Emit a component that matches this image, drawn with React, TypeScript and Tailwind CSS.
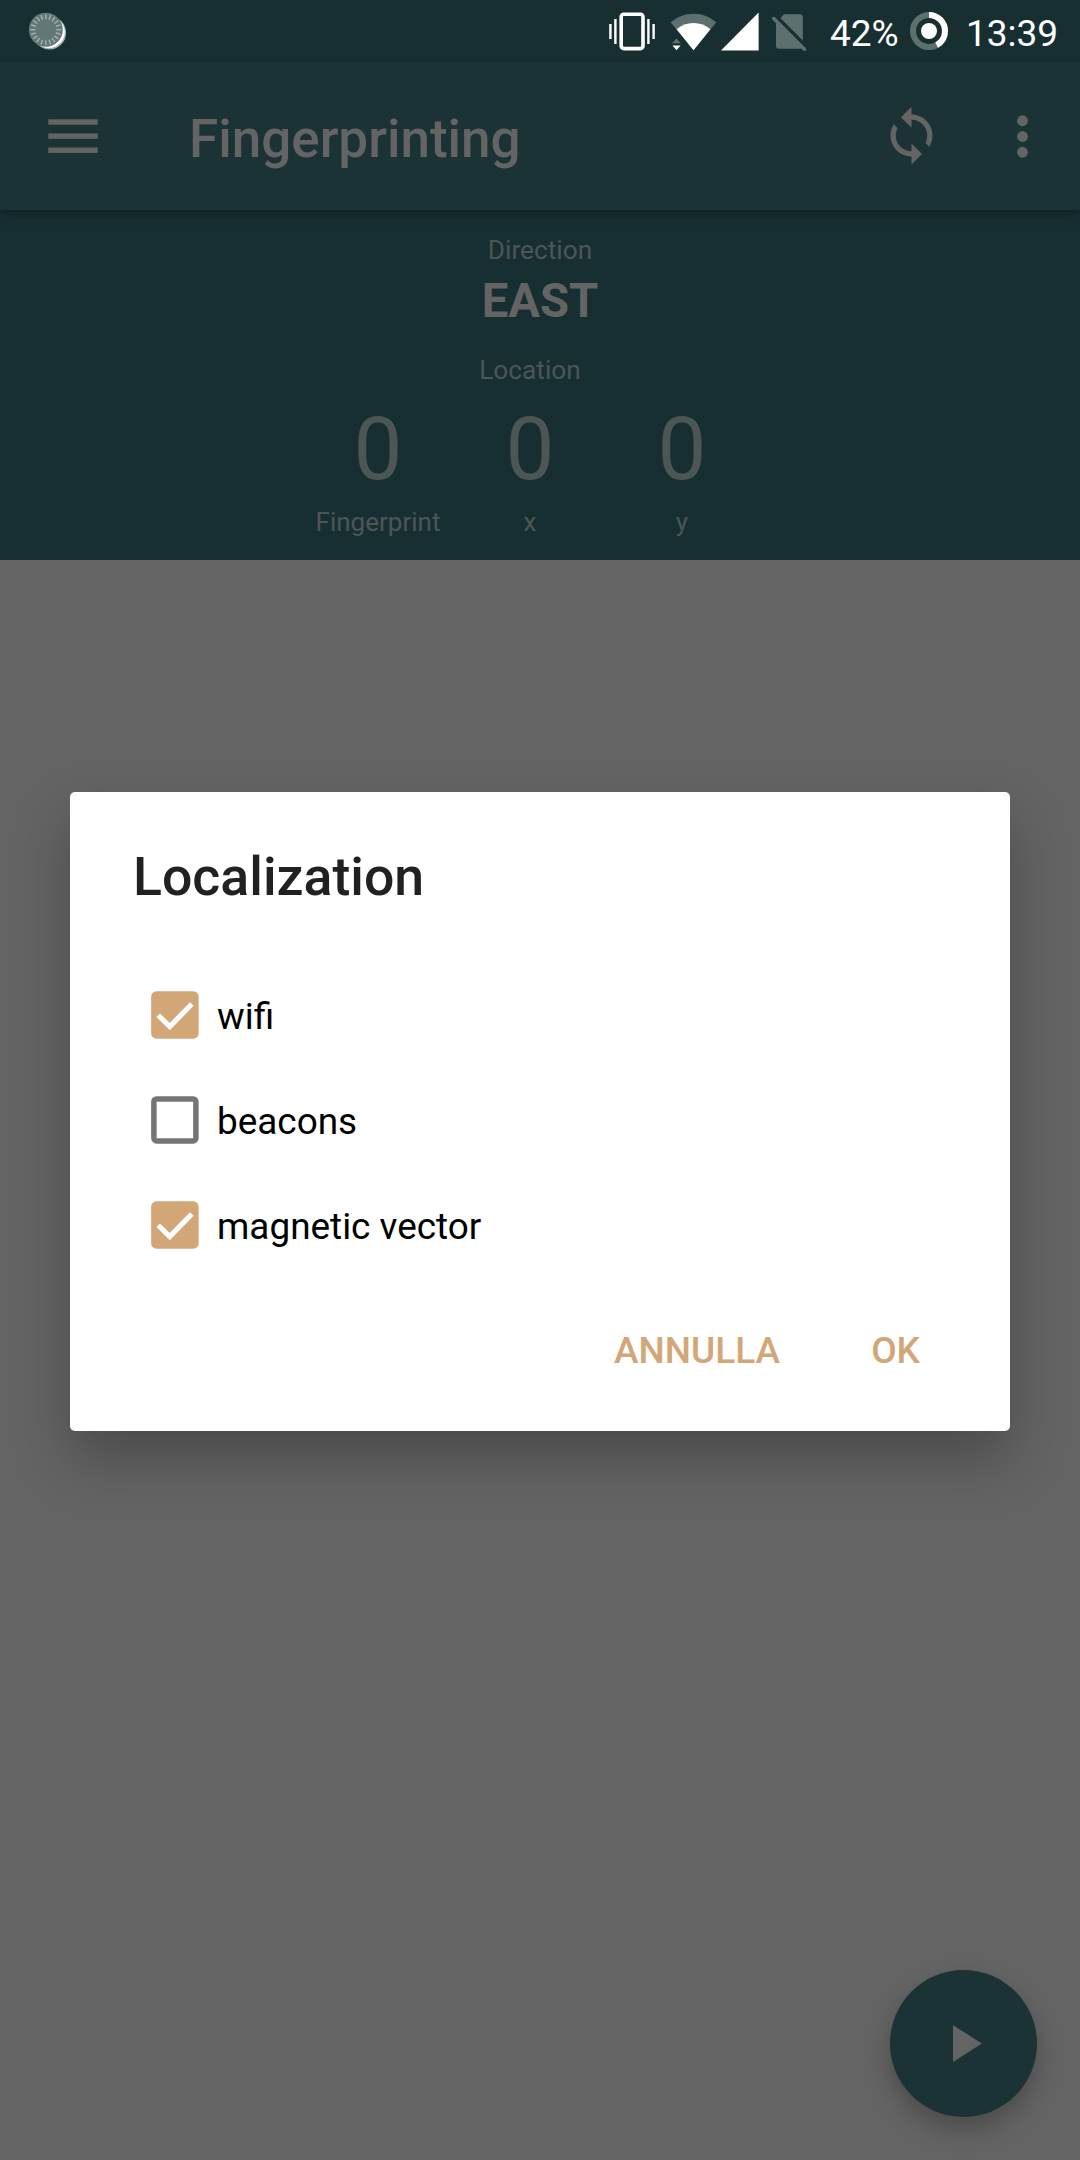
import React from "react";

function SpinnerBadge() {
  const ticks = Array.from({ length: 20 }, (_, i) => i * 18);
  return (
    <svg width="44" height="44" viewBox="0 0 44 44">
      <circle cx="25.5" cy="22.8" r="16.6" fill="#a3b0ae" />
      <circle cx="24.8" cy="22" r="16" fill="#ffffff" />
      <circle cx="21.8" cy="19.7" r="17" fill="#637876" />
      {ticks.map((a) => (
        <line
          key={a}
          x1="21.8"
          y1="4.2"
          x2="21.8"
          y2="9.2"
          stroke="#a9b5b3"
          strokeWidth="1.3"
          transform={`rotate(${a} 21.8 19.7)`}
        />
      ))}
    </svg>
  );
}

function VibrateIcon() {
  return (
    <svg width="48" height="40" viewBox="0 0 48 40" fill="#ffffff">
      <rect x="13.2" y="3.2" width="21.8" height="34.4" rx="2.6" fill="none" stroke="#ffffff" strokeWidth="3.6" />
      <rect x="6.2" y="8" width="2.4" height="25" />
      <rect x="1.2" y="13" width="2.4" height="15" />
      <rect x="39.2" y="8" width="2.4" height="25" />
      <rect x="44.4" y="13" width="2.4" height="15" />
    </svg>
  );
}

function WifiIcon() {
  return (
    <svg width="48" height="40" viewBox="0 0 48 40">
      <path d="M0.8 11.4C7 6.2 14.8 2.8 23.5 2.8s16.5 3.4 22.7 8.6L23.5 39.3z" fill="#5d706f" />
      <path d="M6.6 18.2C11.6 14.2 17 12 23.5 12s11.9 2.2 16.9 6.2L23.5 39.3z" fill="#ffffff" />
      <path d="M2 32.2 6.5 27.4 11 32.2z" fill="#5d706f" />
      <path d="M2.4 34.4h8.2L6.5 39.3z" fill="#ffffff" />
    </svg>
  );
}

function NoSimIcon() {
  return (
    <svg width="36" height="40" viewBox="0 0 36 40">
      <path
        d="M12 3.2H27.8Q30.8 3.2 30.8 6.2V34.8Q30.8 37.8 27.8 37.8H7.2Q4 37.8 4 34.8V11.2z"
        fill="#5d706f"
      />
      <path d="M0 1.8 38 39.8" stroke="#182f32" strokeWidth="4.4" />
      <path d="M1.8 7.6 32.4 38.2" stroke="#5d706f" strokeWidth="3.6" strokeLinecap="round" />
    </svg>
  );
}

function BatteryRing() {
  return (
    <svg width="40" height="40" viewBox="0 0 40 40">
      <circle cx="20" cy="20" r="16" fill="none" stroke="#5d706f" strokeWidth="6" />
      <circle
        cx="20"
        cy="20"
        r="16"
        fill="none"
        stroke="#ffffff"
        strokeWidth="6"
        pathLength="100"
        strokeDasharray="42 58"
        transform="rotate(-90 20 20)"
      />
      <circle cx="20" cy="20" r="8" fill="#ffffff" />
    </svg>
  );
}

function StatusBar() {
  return (
    <div className="relative z-10 flex h-[63px] items-start bg-[#182f32] text-[37px] leading-[44px] text-white">
      <div className="ml-[24px] mt-[10px]">
        <SpinnerBadge />
      </div>
      <div className="ml-[540px] mt-[11px]">
        <VibrateIcon />
      </div>
      <div className="ml-[14px] mt-[11px]">
        <WifiIcon />
      </div>
      <svg className="ml-[3px] mt-[11px]" width="38" height="40" viewBox="0 0 38 40">
        <path d="M0 39.4 37.6 1.6V39.4z" fill="#ffffff" />
      </svg>
      <div className="ml-[13px] mt-[11px]">
        <NoSimIcon />
      </div>
      <span className="ml-[22px] mt-[12px] w-[79px] whitespace-nowrap">42%</span>
      <div className="mt-[11px]">
        <BatteryRing />
      </div>
      <span className="ml-[17px] mt-[12px] whitespace-nowrap">13:39</span>
    </div>
  );
}

function Toolbar() {
  return (
    <header className="relative flex h-[147px] items-center bg-[#1c3335] text-[#646464] shadow-[0_3px_10px_rgba(0,0,0,0.35)]">
      <svg className="ml-[48px]" width="50" height="36" viewBox="0 0 50 36" fill="currentColor">
        <rect x="0.3" y="0.3" width="49.4" height="5.4" />
        <rect x="0.3" y="14.4" width="49.4" height="5.4" />
        <rect x="0.3" y="28.5" width="49.4" height="5.4" />
      </svg>
      <h1 className="ml-[91px] mt-[5px] text-[53px] font-medium leading-[64px]">Fingerprinting</h1>
      <svg className="ml-auto -mt-[2px]" width="63" height="63" viewBox="0 0 24 24" fill="currentColor">
        <path d="M12 4V1L8 5l4 4V6c3.31 0 6 2.69 6 6 0 1.01-.25 1.97-.7 2.8l1.46 1.46C19.54 15.03 20 13.57 20 12c0-4.42-3.58-8-8-8zm0 14c-3.31 0-6-2.69-6-6 0-1.01.25-1.97.7-2.8L5.24 7.74C4.46 8.97 4 10.43 4 12c0 4.42 3.58 8 8 8v3l4-4-4-4v3z" />
      </svg>
      <svg className="ml-[48px] mr-[26px]" width="63" height="63" viewBox="0 0 24 24" fill="currentColor">
        <circle cx="12" cy="6" r="2.08" />
        <circle cx="12" cy="12" r="2.08" />
        <circle cx="12" cy="18" r="2.08" />
      </svg>
    </header>
  );
}

function Counter({ label }: { label: string }) {
  return (
    <div className="flex w-[152px] flex-col items-center">
      <span className="text-[87px] leading-[98px]">0</span>
      <span className="mt-[8px] text-[26px] leading-[32px]">{label}</span>
    </div>
  );
}

function LocationPanel() {
  return (
    <section className="flex h-[350px] flex-col items-center bg-[#182f32] pt-[24px] text-[26.25px] leading-[32px] text-[#4b5655]">
      <span>Direction</span>
      <span className="mt-[7px] text-[47.25px] font-bold leading-[56px] text-[#646464]">EAST</span>
      <div className="mr-[20px] flex flex-col items-center">
        <span className="mt-[25px]">Location</span>
        <div className="mt-[14px] flex">
          <Counter label="Fingerprint" />
          <Counter label="x" />
          <Counter label="y" />
        </div>
      </div>
    </section>
  );
}

function Option({ label, checked }: { label: string; checked: boolean }) {
  return (
    <label className="flex h-[105px] items-center text-[36.9px] leading-[48px] text-black">
      <span className="w-[84px] pl-[10px]">
        <svg width="63" height="63" viewBox="0 0 24 24">
          {checked ? (
            <>
              <rect x="3.1" y="3.1" width="18.1" height="18.1" rx="2" fill="#d3a677" />
              <path d="M5.8 12.3 10.2 16.6 18.6 8" fill="none" stroke="#ffffff" strokeWidth="1.95" />
            </>
          ) : (
            <rect x="4.15" y="4.15" width="16" height="16" rx="1" fill="none" stroke="#757575" strokeWidth="2.1" />
          )}
        </svg>
      </span>
      <span className="mt-[5px]">{label}</span>
    </label>
  );
}

function LocalizationDialog() {
  return (
    <div className="absolute inset-x-0 bottom-0 top-[63px] flex items-center justify-center">
      <div className="flex h-[639px] w-[940px] flex-col rounded-[5px] bg-white px-[63px] pt-[53px] shadow-[0_28px_56px_rgba(0,0,0,0.25)]">
        <h2 className="text-[53.6px] font-medium leading-[64px] text-[#212121]">Localization</h2>
        <div className="mt-[53px]">
          <Option label="wifi" checked />
          <Option label="beacons" checked={false} />
          <Option label="magnetic vector" checked />
        </div>
        <div className="mt-[50px] flex justify-end text-[37px] font-medium leading-[48px] text-[#d3a677]">
          <button className="mr-[91px]">ANNULLA</button>
          <button className="mr-[27px]">OK</button>
        </div>
      </div>
    </div>
  );
}

export default function App() {
  return (
    <div className="relative flex h-[2160px] w-[1080px] flex-col overflow-hidden bg-[#646464] font-['Roboto',sans-serif]">
      <StatusBar />
      <Toolbar />
      <LocationPanel />
      <button className="mb-[43px] ml-auto mr-[43px] mt-auto flex h-[147px] w-[147px] items-center justify-center rounded-full bg-[#1c3335] shadow-[0_12px_24px_rgba(0,0,0,0.25)]">
        <svg width="63" height="63" viewBox="0 0 24 24" fill="#646464">
          <path d="M8 5v14l11-7z" />
        </svg>
      </button>
      <LocalizationDialog />
    </div>
  );
}
